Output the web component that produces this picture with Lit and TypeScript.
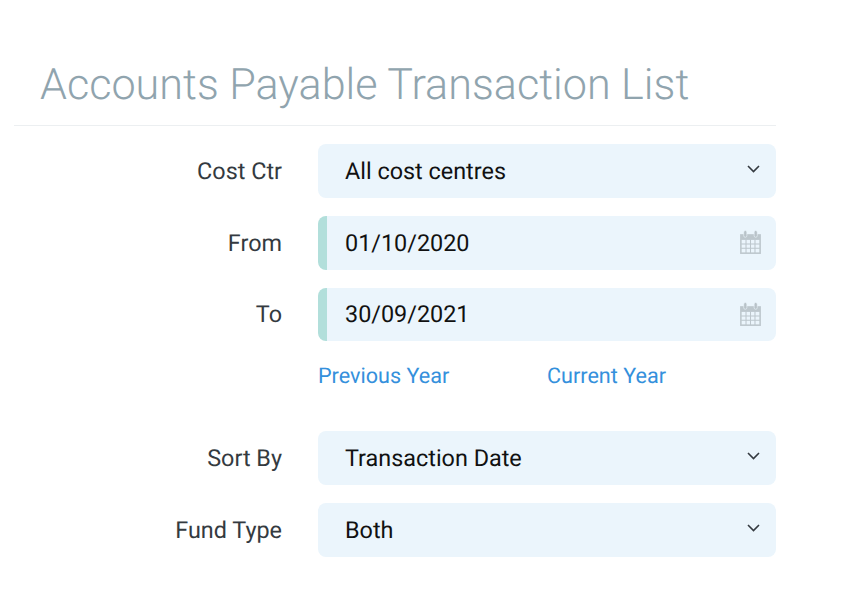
import { LitElement, html, css, svg } from 'lit';
import { customElement } from 'lit/decorators.js';

const chevron = html`<svg class="chevron" width="13" height="8" viewBox="0 0 13 8"><path d="M1 1 L6.500 6.500 L12 1" fill="none" stroke="#343a40" stroke-width="1.600"/></svg>`;

const calendar = html`<svg class="cal" width="23" height="25" viewBox="0 0 22 24">
  <path d="M1 4 H21 V23 H1 Z" fill="#bdc7cd"/>
  <path d="M2.500 9.500 H19.500 V21.500 H2.500 Z" fill="#ebf5fc"/>
  ${svg`<path d="M2 13.500 H20 M2 17.500 H20 M6.700 9 V22 M11 9 V22 M15.300 9 V22" stroke="#bcc6cc" stroke-width="1"/>`}
  <rect x="4.500" y="0.500" width="3" height="6.500" rx="1.500" fill="#b8c2c8" stroke="#ebf5fc" stroke-width=".6"/>
  <rect x="14.500" y="0.500" width="3" height="6.500" rx="1.500" fill="#b8c2c8" stroke="#ebf5fc" stroke-width=".6"/>
</svg>`;

@customElement('app-root')
export class AppRoot extends LitElement {
  static styles = css`
    :host {
      display: block;
      width: 861px;
      height: 603px;
      background: #fff;
      font-family: Roboto, "Liberation Sans", sans-serif;
      text-rendering: geometricPrecision;
      overflow: hidden;
    }
    .page {
      width: 762px;
      margin-left: 14px;
      padding-top: 58px;
    }
    h1 {
      margin: 0;
      padding: 0 0 13px 26px;
      font-size: 43.130px;
      line-height: 54px;
      font-weight: 300;
      color: #90a4ae;
      border-bottom: 1px solid #eceff1;
    }
    form {
      display: flex;
      flex-direction: column;
      padding-top: 18px;
    }
    .row {
      display: grid;
      grid-template-columns: 268px 458px;
      column-gap: 36px;
      align-items: center;
      height: 53.75px;
      margin-bottom: 18px;
    }
    label {
      font-size: 23.400px;
      color: #343a40;
      text-align: right;
    }
    .field {
      height: 53.75px;
      box-sizing: border-box;
      display: flex;
      align-items: center;
      justify-content: space-between;
      padding: 0 14px 0 27px;
      background: #ebf5fc;
      border-radius: 8px;
      font-size: 23.400px;
      color: #111;
    }
    .field.date {
      padding-left: 18px;
      border-left: 9px solid #b2dfdb;
    }
    .chevron {
      margin-right: 2px;
      margin-bottom: 4px;
    }
    .links {
      display: grid;
      grid-template-columns: 229px auto;
      align-self: start;
      font-size: 21.600px;
      line-height: 36px;
      color: #3490dc;
    }
    .links a { color: inherit; text-decoration: none; }
  `;

  render() {
    return html`
      <div class="page">
        <h1>Accounts Payable Transaction List</h1>
        <form>
          <div class="row"><label>Cost Ctr</label><div class="field"><span>All cost centres</span>${chevron}</div></div>
          <div class="row"><label>From</label><div class="field date"><span>01/10/2020</span>${calendar}</div></div>
          <div class="row"><label>To</label><div class="field date"><span>30/09/2021</span>${calendar}</div></div>
          <div class="row"><span></span><div class="links"><a href="#">Previous Year</a><a href="#">Current Year</a></div></div>
          <div class="row"><label>Sort By</label><div class="field"><span>Transaction Date</span>${chevron}</div></div>
          <div class="row"><label>Fund Type</label><div class="field"><span>Both</span>${chevron}</div></div>
        </form>
      </div>
    `;
  }
}
